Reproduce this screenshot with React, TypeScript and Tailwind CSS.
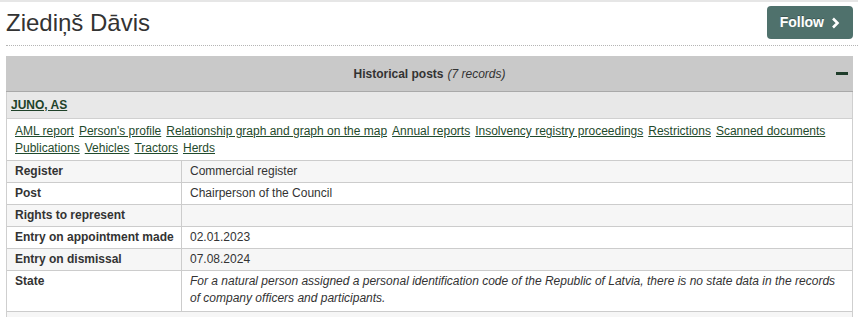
import React from 'react';

const links = [
  'AML report',
  "Person's profile",
  'Relationship graph and graph on the map',
  'Annual reports',
  'Insolvency registry proceedings',
  'Restrictions',
  'Scanned documents',
  'Publications',
  'Vehicles',
  'Tractors',
  'Herds',
];

const rows: { label: string; value: string; italic?: boolean }[] = [
  { label: 'Register', value: 'Commercial register' },
  { label: 'Post', value: 'Chairperson of the Council' },
  { label: 'Rights to represent', value: '' },
  { label: 'Entry on appointment made', value: '02.01.2023' },
  { label: 'Entry on dismissal', value: '07.08.2024' },
  {
    label: 'State',
    value:
      'For a natural person assigned a personal identification code of the Republic of Latvia, there is no state data in the records of company officers and participants.',
    italic: true,
  },
];

export default function App() {
  return (
    <div className="h-[317px] overflow-hidden bg-white border-t-2 border-[#e6e6e6] pl-[6px] font-['Liberation_Sans',Arial,sans-serif] text-[#333]">
      {/* heading */}
      <div className="flex items-start justify-between h-[44px] pr-[5px] border-b border-dotted border-[#b5b5b5]">
        <h1 className="pt-[6px] text-[24px] leading-[30px] text-[#333]">Ziediņš Dāvis</h1>
        <button className="mt-[4px] flex items-center gap-[7px] h-[33px] px-[13px] rounded-[4px] bg-[#4f716c] text-white text-[14px] font-bold [text-shadow:0_-1px_0_rgba(0,0,0,0.25)]">
          Follow
          <svg width="9" height="12" viewBox="0 0 9 12" fill="none">
            <path d="M2 1.5L6.5 6L2 10.5" stroke="white" strokeWidth="2.6" />
          </svg>
        </button>
      </div>

      {/* panel */}
      <div className="mt-[10px] mr-[5px] text-[12px]">
        <div className="relative flex items-center justify-center h-[36px] bg-[#c9c9c9] border-b border-[#a9a9a9]">
          <span className="font-bold">Historical posts</span>
          <span className="italic ml-[4px]">(7 records)</span>
          <span className="absolute right-[5px] top-[16px] w-[12px] h-[3px] bg-[#1f3d2b]" />
        </div>

        <div className="border-x border-[#cfcfcf]">
          <div className="h-[27px] flex items-center px-[4px] bg-[#e8e8e8] border-b border-[#d0d0d0]">
            <a href="#" className="font-bold underline text-[#1f4229]">JUNO, AS</a>
          </div>

          <div className="flex flex-wrap gap-x-[5px] px-[8px] pt-[4px] pb-[3px] leading-[17px] bg-white">
            {links.map((l) => (
              <a key={l} href="#" className="underline text-[#1f4a2c]">
                {l}
              </a>
            ))}
          </div>

          {rows.map((r, i) => (
            <div
              key={r.label}
              className={`flex border-t border-[#cccccc] leading-[17px] ${i % 2 === 0 ? 'bg-[#f6f6f6]' : 'bg-white'}`}
            >
              <div className="w-[175px] shrink-0 px-[8px] py-[2px] font-bold whitespace-nowrap border-r border-[#cccccc]">
                {r.label}
              </div>
              <div className={`flex-1 px-[8px] py-[2px] ${r.italic ? 'italic pb-[4px]' : ''}`}>{r.value}</div>
            </div>
          ))}
          <div className="h-[10px] border-t border-[#cccccc] bg-[#f6f6f6]" />
        </div>
      </div>
    </div>
  );
}
